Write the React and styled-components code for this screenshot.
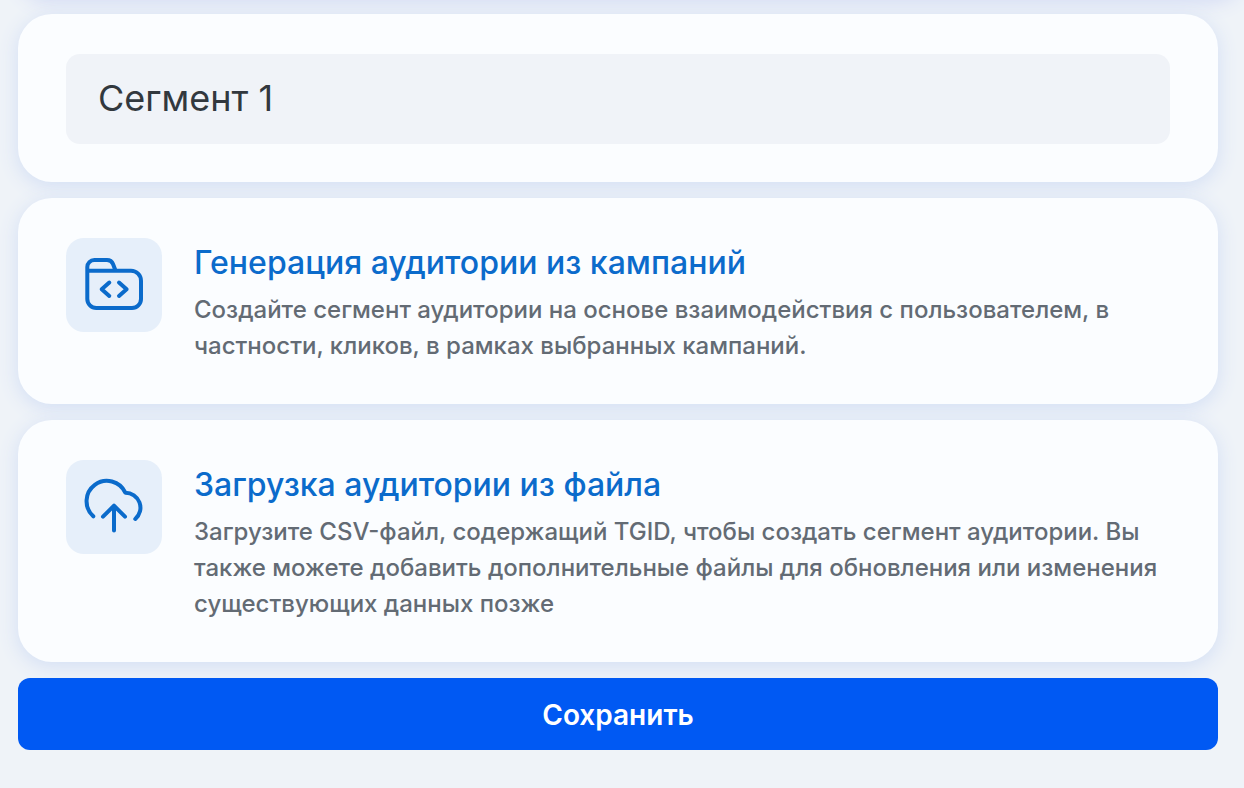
import React, { useState } from "react"
import styled, { createGlobalStyle } from "styled-components"

const GlobalStyle = createGlobalStyle`
  * {
    box-sizing: border-box;
  }

  body {
    margin: 0;
    background: #eff3f8;
    font-family: Inter, "Liberation Sans", sans-serif;
  }
`

const Form = styled.form`
  display: flex;
  flex-direction: column;
  gap: 16px;
  padding: 0 26px 38px 18px;
`

//  SECTION: Cards
const Card = styled.section`
  display: flex;
  align-items: flex-start;
  gap: 32px;
  padding: 40px 48px;
  border-radius: 34px;
  background: #fbfdff;
  box-shadow: 0 4px 20px #d2def4;
`

//  Lower edge of the panel scrolled out above the form
const ScrolledPanel = styled.div`
  height: 80px;
  margin-top: -82px;
  margin-right: -26px;
  border-radius: 32px;
  box-shadow: 0 4px 20px #d2daf4;
`

const NameCard = styled(Card)`
  padding-bottom: 38px;
`

const NameInput = styled.input`
  width: 100%;
  height: 90px;
  padding: 0 32px 2px;
  border: none;
  border-radius: 14px;
  outline: none;
  background: #f0f3f8;
  color: #32383e;
  font-family: inherit;
  font-size: 36px;
`

const IconBox = styled.div`
  display: flex;
  flex: none;
  align-items: center;
  justify-content: center;
  width: 96px;
  height: 94px;
  border-radius: 18px;
  background: #e6effa;
`

const Icon = styled.svg`
  width: 64px;
  height: 64px;
  fill: none;
  stroke: #0b6bcb;
  stroke-width: 4;
  stroke-linecap: round;
  stroke-linejoin: round;
`

const Title = styled.a`
  display: block;
  margin-bottom: 4px;
  color: #0b6bcb;
  font-size: 32px;
  font-weight: 500;
  line-height: 50px;
  text-decoration: none;
`

const Description = styled.p`
  margin: 0;
  color: #636b74;
  font-size: 24px;
  font-weight: 500;
  line-height: 36px;
`

const SaveButton = styled.button`
  height: 72px;
  padding: 2px 0 0;
  border: none;
  border-radius: 12px;
  background: #0059f3;
  color: #fff;
  font-family: inherit;
  font-size: 28px;
  font-weight: 600;
`

const FolderCodeIcon = () => (
  <Icon viewBox="0 0 64 64" aria-hidden="true">
    <path d="M5.3 17.7H49a10 10 0 0 1 10 10V46a9 9 0 0 1-9 9H14.3a9 9 0 0 1-9-9V14a7 7 0 0 1 7-7H25c3 0 5 1.4 6 4l2.6 6.7" />
    <path d="M27.3 29.5 19.7 36.3 27.3 43M37 29.5 44.6 36.3 37 43" />
  </Icon>
)

const CloudUploadIcon = () => (
  <Icon viewBox="0 0 64 64" aria-hidden="true">
    <path d="M11.3 41.3A20.3 20.3 0 1 1 43.3 17.7A15 15 0 0 1 53.3 44" />
    <path d="M32 55.5V31M21 41.7 32 30.7 43 41.7" />
  </Icon>
)

const SourceCard = ({ icon, title, children }) => (
  <Card>
    <IconBox>{icon}</IconBox>
    <div>
      <Title href="#">{title}</Title>
      <Description>{children}</Description>
    </div>
  </Card>
)

const App = () => {
  const [name, setName] = useState("Сегмент 1")

  return (
    <>
      <GlobalStyle />
      <Form onSubmit={e => e.preventDefault()}>
        <ScrolledPanel />
        <NameCard>
          <NameInput
            aria-label="Название сегмента"
            value={name}
            onChange={e => setName(e.target.value)}
          />
        </NameCard>

        <SourceCard icon={<FolderCodeIcon />} title="Генерация аудитории из кампаний">
          Создайте сегмент аудитории на основе взаимодействия с пользователем, в
          частности, кликов, в рамках выбранных кампаний.
        </SourceCard>

        <SourceCard icon={<CloudUploadIcon />} title="Загрузка аудитории из файла">
          Загрузите CSV-файл, содержащий TGID, чтобы создать сегмент аудитории. Вы
          также можете добавить дополнительные файлы для обновления или изменения
          существующих данных позже
        </SourceCard>

        <SaveButton type="submit">Сохранить</SaveButton>
      </Form>
    </>
  )
}

export default App
